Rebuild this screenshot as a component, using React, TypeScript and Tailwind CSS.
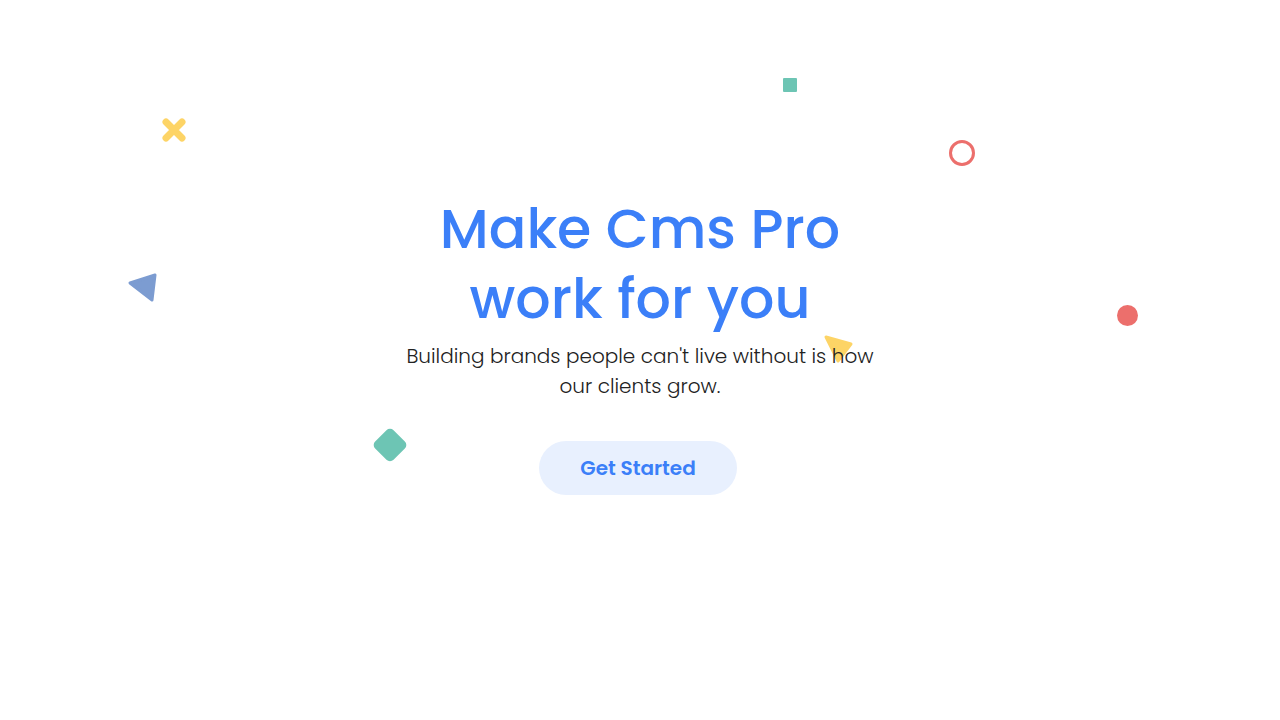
import React from "react";

const font = { fontFamily: "Poppins, Inter, 'Noto Sans', sans-serif" };

function Shapes() {
  return (
    <div className="pointer-events-none absolute inset-0">
      {/* yellow cross */}
      <svg className="absolute left-[162px] top-[118px]" width="24" height="24" viewBox="0 0 24 24">
        <path d="M4 4 L20 20 M20 4 L4 20" stroke="#fdd466" strokeWidth="7" strokeLinecap="round" />
      </svg>
      {/* teal square */}
      <div className="absolute left-[783px] top-[78px] h-[14px] w-[14px] rounded-[1px] bg-[#6dc5b4]" />
      {/* red ring */}
      <div className="absolute left-[949px] top-[140px] h-[26px] w-[26px] rounded-full border-[3px] border-[#ec6f6c]" />
      {/* blue triangle */}
      <svg className="absolute left-[125px] top-[269px]" width="36" height="36" viewBox="0 0 36 36">
        <polygon points="5,14 30,6 27,31" fill="#7c9cd1" stroke="#7c9cd1" strokeWidth="3" strokeLinejoin="round" />
      </svg>
      {/* red dot */}
      <div className="absolute left-[1117px] top-[305px] h-[21px] w-[21px] rounded-full bg-[#ec6f6c]" />
      {/* teal diamond */}
      <div className="absolute left-[377px] top-[432px] h-[26px] w-[26px] rotate-45 rounded-[5px] bg-[#6dc5b4]" />
    </div>
  );
}

export default function App() {
  return (
    <div className="relative h-[720px] w-full overflow-hidden bg-white" style={font}>
      <Shapes />
      <div className="relative flex flex-col items-center pt-[194px]">
        <h1 className="text-center text-[55.5px] font-medium leading-[70px] text-[#3b7ff8]">
          Make Cms Pro
          <br />
          work for you
        </h1>
        <div className="relative mt-[7px]">
          <p className="relative z-10 text-center text-[20px] font-light leading-[30px] text-[#222222]">
            Building brands people can't live without is how
            <br />
            our clients grow.
          </p>
          <svg className="absolute left-[417px] top-[-7px]" width="34" height="32" viewBox="0 0 34 32">
            <polygon points="3,3 28,10 15,27" fill="#fdd466" stroke="#fdd466" strokeWidth="3" strokeLinejoin="round" />
          </svg>
        </div>
        <button className="mt-[40px] -ml-1 h-[54px] w-[198px] rounded-full bg-[#e8f0fe] text-[20px] font-semibold text-[#3b7ff8]">
          Get Started
        </button>
      </div>
    </div>
  );
}
